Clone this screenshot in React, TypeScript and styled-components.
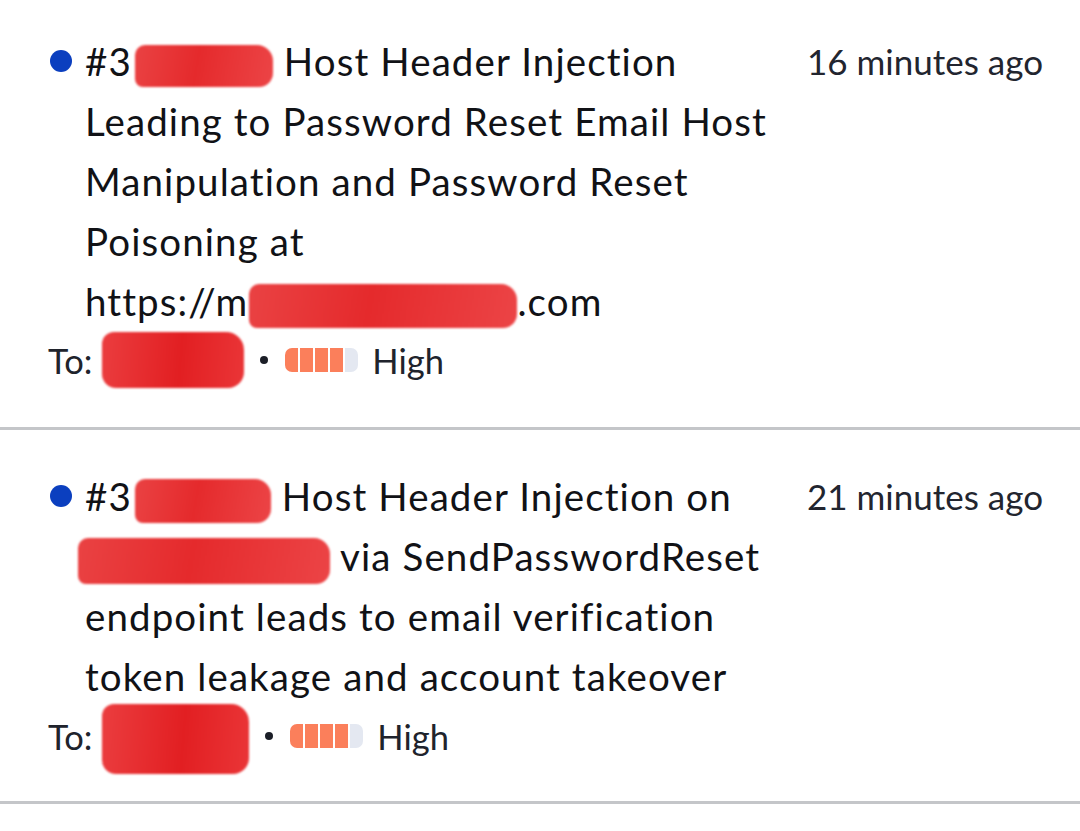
import styled, { createGlobalStyle } from 'styled-components';

const GlobalStyle = createGlobalStyle`
  body {
    margin: 0;
    background: #ffffff;
    font-family: Lato, 'Noto Sans', sans-serif;
  }
`;

const List = styled.div`
  width: 1080px;
  display: flex;
  flex-direction: column;
`;

const Item = styled.div<{ $top: number; $bottom: number }>`
  padding: ${(p) => p.$top}px 37px ${(p) => p.$bottom}px 48px;
  border-bottom: 3px solid #c4c6c9;
  display: flex;
  flex-direction: column;
`;

const TopRow = styled.div`
  display: flex;
  align-items: flex-start;
`;

const Dot = styled.span`
  flex: none;
  width: 22px;
  height: 22px;
  border-radius: 50%;
  background: #0b3fbf;
  margin: 19px 13px 0 2px;
`;

const Title = styled.div`
  flex: none;
  width: 700px;
  font-size: 38.5px;
  line-height: 60px;
  letter-spacing: 1.1px;
  color: #111216;
`;

const NoWrap = styled.span`
  white-space: nowrap;
`;

const Time = styled.div`
  margin-left: auto;
  font-size: 35px;
  line-height: 60px;
  color: #22252f;
  white-space: nowrap;
`;

const Redact = styled.span<{ $w: number; $h: number; $shift?: number }>`
  display: inline-block;
  vertical-align: middle;
  width: ${(p) => p.$w}px;
  height: ${(p) => p.$h}px;
  margin-left: ${(p) => p.$shift ?? 3}px;
  background: linear-gradient(100deg, #ea4243 0%, #e52a2c 45%, #ec4446 100%);
  border-radius: 10px 16px 14px 8px;
  filter: blur(1px);
`;

const Meta = styled.div<{ $gap: number }>`
  display: flex;
  align-items: center;
  margin-top: ${(p) => p.$gap}px;
  height: 40px;
  font-size: 34.5px;
  color: #20232c;
`;

const Label = styled.span`
  margin-right: 10px;
`;

const MetaRedact = styled.span<{ $w: number; $h: number; $up: number }>`
  display: inline-block;
  flex: none;
  width: ${(p) => p.$w}px;
  height: ${(p) => p.$h}px;
  margin-top: ${(p) => -p.$up}px;
  margin-bottom: ${(p) => -(p.$h - 40 - p.$up)}px;
  background: linear-gradient(95deg, #eb3d3f 0%, #e21f22 55%, #ea3537 100%);
  border-radius: 12px 18px 16px 14px;
  filter: blur(1.2px);
`;

const Bullet = styled.span`
  flex: none;
  width: 8px;
  height: 8px;
  border-radius: 50%;
  background: #1b1e27;
  margin: 0 17px 0 16px;
`;

const Severity = styled.span`
  display: flex;
  gap: 2px;
  height: 24px;
  margin-right: 14px;
`;

const Segment = styled.span<{ $on: boolean }>`
  width: 13px;
  background: ${(p) => (p.$on ? '#fb7f5b' : '#e4e8f1')};

  &:first-child {
    border-radius: 7px 0 0 7px;
  }
  &:last-child {
    border-radius: 0 7px 7px 0;
  }
`;

const SeverityBar = ({ level }: { level: number }) => (
  <Severity>
    {[0, 1, 2, 3, 4].map((i) => (
      <Segment key={i} $on={i < level} />
    ))}
  </Severity>
);

const App = () => {
  return (
    <>
      <GlobalStyle />
      <List>
        <Item $top={31} $bottom={47}>
          <TopRow>
            <Dot />
            <Title>
              <NoWrap>
                #3<Redact $w={138} $h={42} />
              </NoWrap>{' '}
              Host Header Injection Leading to Password Reset Email Host
              Manipulation and Password Reset Poisoning at{' '}
              <NoWrap>
                https://m<Redact $w={268} $h={44} $shift={1} />
                .com
              </NoWrap>
            </Title>
            <Time>16 minutes ago</Time>
          </TopRow>
          <Meta $gap={9}>
            <Label>To:</Label>
            <MetaRedact $w={142} $h={56} $up={8} />
            <Bullet />
            <SeverityBar level={4} />
            High
          </Meta>
        </Item>
        <Item $top={36} $bottom={45}>
          <TopRow>
            <Dot />
            <Title>
              <NoWrap>
                #3<Redact $w={136} $h={44} />
              </NoWrap>{' '}
              Host Header Injection on{' '}
              <Redact $w={252} $h={46} $shift={-7} /> via SendPasswordReset
              endpoint leads to email verification token leakage and account
              takeover
            </Title>
            <Time>21 minutes ago</Time>
          </TopRow>
          <Meta $gap={10}>
            <Label>To:</Label>
            <MetaRedact $w={147} $h={70} $up={12} />
            <Bullet />
            <SeverityBar level={4} />
            High
          </Meta>
        </Item>
      </List>
    </>
  );
};

export default App;
